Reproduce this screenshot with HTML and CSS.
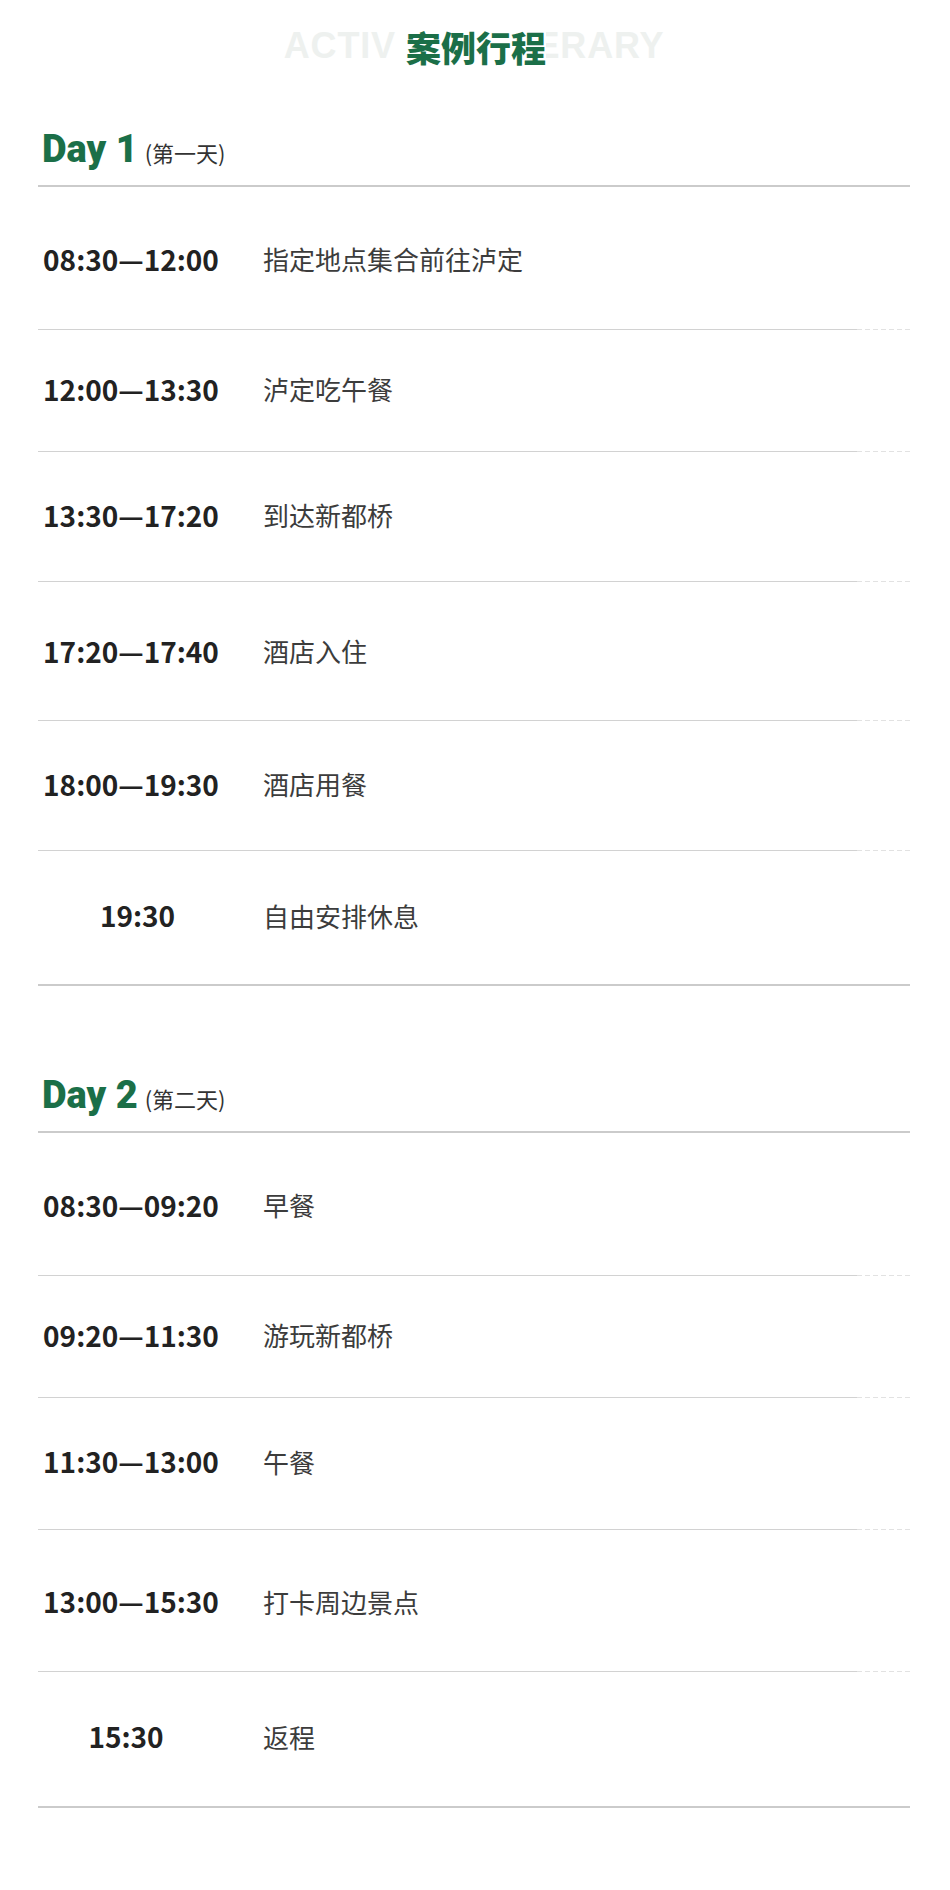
FILE: index.html
```html
<!DOCTYPE html>
<html lang="zh-CN">
<head>
  <meta charset="UTF-8" />
  <title>案例行程</title>
  <link rel="stylesheet" href="styles.css">
</head>
<body>
  <div class="page">
    <div class="title-wrap">
      <span class="title-bg">ACTIVITY ITINERARY</span>
      <h2 class="title">案例行程</h2>
    </div>

    <section class="day day-1">
      <div class="day-head">
        <span class="day-name">Day 1</span>
        <span class="day-sub">(第一天)</span>
      </div>
      <div class="rows">
        <div class="row"><span class="time">08:30—12:00</span><span class="desc">指定地点集合前往泸定</span></div>
        <div class="row"><span class="time">12:00—13:30</span><span class="desc">泸定吃午餐</span></div>
        <div class="row"><span class="time">13:30—17:20</span><span class="desc">到达新都桥</span></div>
        <div class="row"><span class="time">17:20—17:40</span><span class="desc">酒店入住</span></div>
        <div class="row"><span class="time">18:00—19:30</span><span class="desc">酒店用餐</span></div>
        <div class="row"><span class="time">19:30</span><span class="desc">自由安排休息</span></div>
      </div>
    </section>

    <section class="day day-2">
      <div class="day-head">
        <span class="day-name">Day 2</span>
        <span class="day-sub">(第二天)</span>
      </div>
      <div class="rows">
        <div class="row"><span class="time">08:30—09:20</span><span class="desc">早餐</span></div>
        <div class="row"><span class="time">09:20—11:30</span><span class="desc">游玩新都桥</span></div>
        <div class="row"><span class="time">11:30—13:00</span><span class="desc">午餐</span></div>
        <div class="row"><span class="time">13:00—15:30</span><span class="desc">打卡周边景点</span></div>
        <div class="row"><span class="time">15:30</span><span class="desc">返程</span></div>
      </div>
    </section>
  </div>
</body>
</html>
```

FILE: styles.css
```css
body {
  margin: 0;
  background: #fff;
  font-family: "Noto Sans CJK SC", "Noto Sans", sans-serif;
}
.page {
  width: 872px;
  margin-left: 38px;
}
.title-wrap {
  display: grid;
  place-items: center;
  height: 36px;
  padding-top: 28px;
}
.title-bg,
.title {
  grid-area: 1 / 1;
}
.title-bg {
  font-family: "Liberation Sans", Arial, sans-serif;
  font-weight: bold;
  font-size: 36px;
  line-height: 1;
  letter-spacing: 0.8px;
  color: #eef1ef;
}
.title {
  margin: 0 6px 0 0;
  padding: 0 0 0 10px;
  background: #fff;
  font-size: 35px;
  line-height: 1;
  font-weight: 900;
  color: #1b6f48;
}
.day-head {
  display: flex;
  align-items: baseline;
  padding: 0 0 17px 4px;
  border-bottom: 2px solid #cbcbcb;
}
.day-1 .day-head {
  margin-top: 66px;
}
.day-2 .day-head {
  margin-top: 90px;
}
.day-name {
  font-family: Roboto, "Liberation Sans", sans-serif;
  font-weight: 900;
  font-size: 38px;
  line-height: 1;
  color: #1b6f48;
}
.day-sub {
  margin-left: 7px;
  font-size: 22px;
  line-height: 1;
  color: #333;
}
.rows {
  border-bottom: 2px solid #cbcbcb;
}
.row {
  display: grid;
  grid-template-columns: 186px 1fr;
  column-gap: 39px;
  align-items: center;
  box-sizing: border-box;
  height: 131px;
  padding-bottom: 5px;
  background:
    linear-gradient(#d2d2d2, #d2d2d2) left bottom / calc(100% - 53px) 1px no-repeat,
    repeating-linear-gradient(to right, #e2e2e2 0 5px, transparent 5px 8px) right bottom / 53px 1px no-repeat;
}
.row:last-child {
  background: none;
}
.day-1 .row:nth-child(1) { height: 143px; padding-bottom: 0; }
.day-1 .row:nth-child(2) { height: 122px; }
.day-1 .row:nth-child(3) { height: 130px; }
.day-1 .row:nth-child(4) { height: 139px; padding-bottom: 2px; }
.day-1 .row:nth-child(5) { height: 130px; }
.day-1 .row:nth-child(6) { height: 133px; }
.day-2 .row:nth-child(1) { height: 143px; padding-bottom: 0; }
.day-2 .row:nth-child(2) { height: 122px; }
.day-2 .row:nth-child(3) { height: 132px; padding-bottom: 6px; }
.day-2 .row:nth-child(4) { height: 142px; padding-bottom: 0; }
.day-2 .row:nth-child(5) { height: 134px; padding-bottom: 6px; }
.time {
  text-align: center;
  font-size: 28px;
  font-weight: bold;
  color: #222;
  white-space: nowrap;
}
.day-1 .row:last-child .time {
  padding-left: 13px;
}
.day-2 .row:last-child .time {
  padding-right: 10px;
}
.desc {
  font-size: 26px;
  color: #3c3c3c;
}
```
